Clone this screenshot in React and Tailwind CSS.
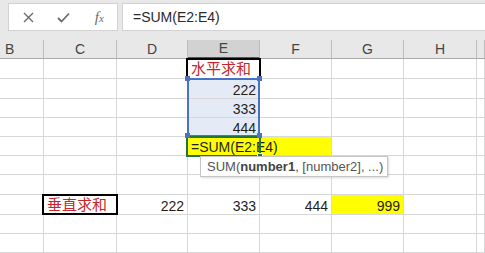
import React from 'react';

const cols = ['B', 'C', 'D', 'E', 'F', 'G', 'H', ''];
const rows = [1, 2, 3, 4, 5, 6, 7, 8, 9, 10];

// cell contents keyed by "col+row"
const cells = {
  E1: { text: '水平求和', cjk: true },
  E2: { text: '222', num: true, sel: true },
  E3: { text: '333', num: true, sel: true },
  E4: { text: '444', num: true, sel: true },
  C8: { text: '垂直求和', cjk: true },
  D8: { text: '222', num: true },
  E8: { text: '333', num: true },
  F8: { text: '444', num: true },
  G8: { text: '999', num: true, yellow: true },
};

function Cell({ col, row }) {
  const c = cells[col + row];
  let cls = 'border-r border-b border-[#d8d8d8] flex items-end leading-none pb-[1px] whitespace-nowrap ';
  if (c && c.yellow) cls += 'bg-[#ffff00] ';
  else if (c && c.sel) cls += 'bg-[#e4ebf7] ';
  if (c && c.num) cls += 'justify-end pr-[3px] text-[14px] text-[#1e1e1e] ';
  if (c && c.cjk) cls += 'pl-[3px] pb-[2px] text-[15px] text-[#c8262c] ';
  return <div className={cls}>{c ? c.text : ''}</div>;
}

function Row({ r }) {
  if (r === 5) {
    // E5 text runs over the empty F5, both filled yellow
    return (
      <>
        {['B', 'C', 'D'].map(col => <Cell key={col} col={col} row={r} />)}
        <div className="col-span-2 border-r border-b border-[#d8d8d8] bg-[#ffff00] flex items-end leading-none pb-[1px] pl-[3px] text-[14px] text-[#1e1e1e] whitespace-nowrap">
          =SUM(E2:E4)
        </div>
        {['G', 'H', ''].map(col => <Cell key={col || 'I'} col={col} row={r} />)}
      </>
    );
  }
  return cols.map(col => <Cell key={col || 'I'} col={col} row={r} />);
}

function Handle({ className }) {
  return <div className={`absolute w-[5px] h-[5px] bg-[#4a72c0] ${className}`} />;
}

export default function App() {
  return (
    <div className="w-[485px] h-[253px] overflow-hidden bg-white" style={{ fontFamily: '"Liberation Sans", "Noto Sans CJK SC", sans-serif' }}>
      {/* formula bar */}
      <div className="h-[40px] bg-[#e8e8e8] flex items-start pt-[3px] pl-[8px] gap-[4px]">
        <div className="w-[110px] h-[28px] bg-white border border-[#d2d2d2] flex items-center pl-[2px]">
          <div className="w-[36px] flex justify-center">
            <svg width="11" height="11" viewBox="0 0 11 11" stroke="#6b6b6b" strokeWidth="1.4">
              <path d="M1 1L10 10M10 1L1 10" />
            </svg>
          </div>
          <div className="w-[36px] flex justify-center">
            <svg width="13" height="11" viewBox="0 0 13 11" fill="none" stroke="#6b6b6b" strokeWidth="1.8">
              <path d="M1 6L4.5 9.5L12 1.5" />
            </svg>
          </div>
          <div className="w-[36px] flex justify-center items-baseline italic text-[#6b6b6b]" style={{ fontFamily: '"Liberation Serif", serif' }}>
            <span className="text-[15px]">f</span>
            <span className="text-[11px]">x</span>
          </div>
        </div>
        <div className="flex-1 h-[28px] bg-white border border-[#d2d2d2] border-r-0 flex items-center pl-[10px] text-[14px] text-[#2a2a2a]">
          =SUM(E2:E4)
        </div>
      </div>

      {/* sheet */}
      <div className="relative">
        <div className="grid grid-cols-[44px_73px_71px_72px_72px_72px_73px_1fr] grid-rows-[19px_20px_20px_19px_19px_19px_19px_20px_20px_19px_19px]">
          {cols.map(col => (
            <div
              key={col || 'I'}
              className={
                'flex items-center text-[14px] text-[#444] border-r border-[#bcbcbc] ' +
                (col === 'E'
                  ? 'bg-[#d2d2d2] border-b-2 border-b-[#217346] justify-center'
                  : 'bg-[#e8e8e8] border-b border-b-[#a9a9a9] ' + (col === 'B' ? 'pl-[5px]' : 'justify-center'))
              }
            >
              {col}
            </div>
          ))}
          {rows.map(r => <Row key={r} r={r} />)}
        </div>

        {/* thick cell borders */}
        <div className="absolute left-[186px] top-[18px] w-[75px] h-[22px] border-2 border-black" />
        <div className="absolute left-[42px] top-[154px] w-[76px] h-[21px] border-2 border-black" />

        {/* range E2:E4 */}
        <div className="absolute left-[187px] top-[38px] w-[73px] h-[59px] border-2 border-[#4a72c0]" />
        {/* active E5 */}
        <div className="absolute left-[186px] top-[96px] w-[75px] h-[21px] border-2 border-[#217346]" />
        <div className="absolute left-[257px] top-[113px] w-[6px] h-[6px] bg-[#217346] border border-white" />
        <Handle className="left-[185px] top-[36px]" />
        <Handle className="left-[257px] top-[36px]" />
        <Handle className="left-[185px] top-[93px]" />
        <Handle className="left-[257px] top-[93px]" />

        {/* tooltip */}
        <div className="absolute left-[200px] top-[116px] w-[188px] h-[21px] bg-white border border-[#c6c6c6] shadow-[1px_1px_2px_rgba(0,0,0,0.15)] flex items-center pl-[6px] text-[13px] text-[#555] whitespace-nowrap">
          SUM(<span className="font-bold text-[#444]">number1</span>, [number2], ...)
        </div>
      </div>
    </div>
  );
}
